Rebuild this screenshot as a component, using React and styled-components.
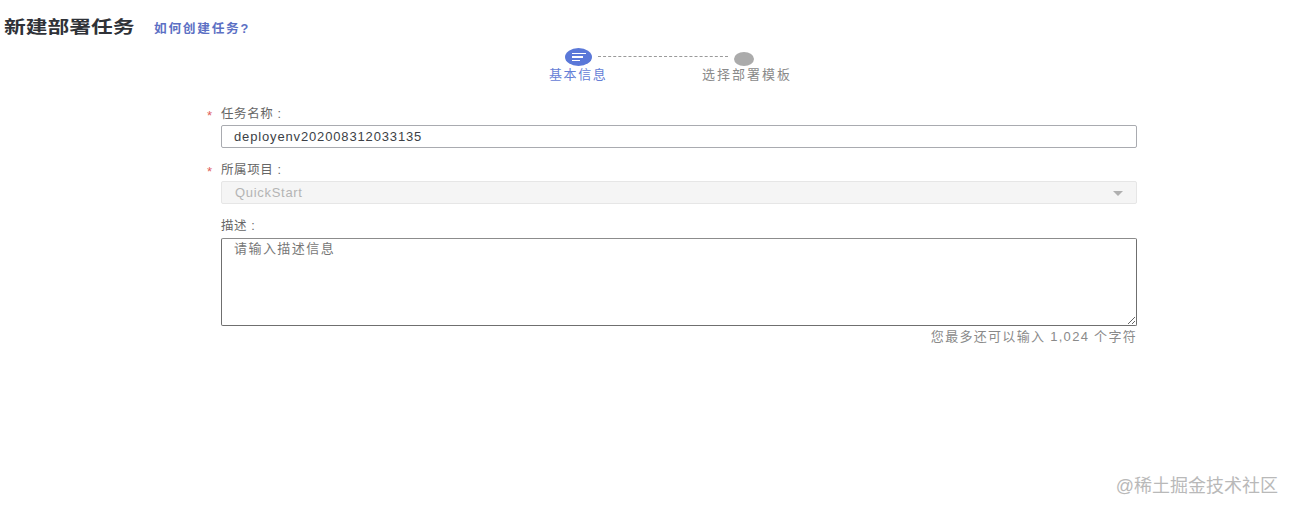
import styled, { createGlobalStyle } from "styled-components";

const GlobalStyle = createGlobalStyle`
	html, body {
		margin: 0;
		padding: 0;
		background: #fff;
		font-family: "Liberation Sans", "Noto Sans CJK SC", sans-serif;
	}
`;

const Page = styled.div`
	position: relative;
	width: 1293px;
	height: 513px;
	overflow: hidden;
	box-sizing: border-box;
	padding-top: 18px;
`;

const Header = styled.header`
	display: flex;
	align-items: center;
	height: 19px;
	padding-left: 4px;
`;

const Title = styled.h1`
	margin: 0;
	width: 150px;
	font-size: 17px;
	line-height: 19px;
	font-weight: 700;
	color: #2f3238;
	white-space: nowrap;
	transform: scaleX(1.28);
	transform-origin: left center;
`;

const HelpLink = styled.a`
	font-size: 12px;
	font-weight: 700;
	letter-spacing: 1.6px;
	color: #5c70c4;
	transform: scaleX(1.06);
	transform-origin: left center;
`;

const Track = styled.div`
	display: flex;
	align-items: center;
	gap: 6px;
	margin: 11px 0 0 565px;
	height: 18px;
`;

const StepDot = styled.span`
	display: flex;
	flex-direction: column;
	align-items: center;
	justify-content: center;
	gap: 2px;
	width: ${(p) => (p.$active ? "27px" : "20px")};
	height: ${(p) => (p.$active ? "18px" : "14px")};
	margin-top: ${(p) => (p.$active ? "0" : "4px")};
	border-radius: 50%;
	background: ${(p) => (p.$active ? "#5a78d8" : "#ababab")};
`;

const DotLine = styled.i`
	display: block;
	height: 1.5px;
	width: ${(p) => p.$w}px;
	margin-right: ${(p) => 14 - p.$w}px;
	background: #fff;
`;

const Connector = styled.span`
	width: 130px;
	margin-top: -2px;
	border-top: 1px dashed #9a9a9a;
`;

const StepLabels = styled.div`
	display: grid;
	grid-template-columns: 153px 90px;
	margin: 1px 0 0 549px;
`;

const StepLabel = styled.span`
	font-size: 13px;
	line-height: 16px;
	letter-spacing: ${(p) => (p.$active ? "1.6px" : "2px")};
	color: ${(p) => (p.$active ? "#6580d6" : "#8a8a8a")};
	white-space: nowrap;
`;

const Form = styled.form`
	display: flex;
	flex-direction: column;
	width: 916px;
	margin: 23px 0 0 221px;
`;

const Field = styled.div`
	display: flex;
	flex-direction: column;
	margin-bottom: 14px;
`;

const Label = styled.label`
	position: relative;
	font-size: 12.5px;
	line-height: 16px;
	height: 16px;
	margin-bottom: ${(p) => (p.$tall ? "4px" : "3px")};
	letter-spacing: 0.6px;
	color: #666;

	${(p) =>
		p.$required &&
		`&::before {
			content: "*";
			position: absolute;
			left: -14px;
			top: 2px;
			color: #e0605a;
			font-size: 13px;
		}`}
`;

const TextInput = styled.input`
	box-sizing: border-box;
	width: 100%;
	height: 23px;
	padding: 0 12px;
	border: 1px solid #a9abb0;
	border-radius: 2px;
	outline: none;
	font: 13px "Liberation Sans", sans-serif;
	letter-spacing: 0.85px;
	color: #3c3f46;
`;

const SelectBox = styled.div`
	box-sizing: border-box;
	display: flex;
	align-items: center;
	justify-content: space-between;
	height: 23px;
	padding: 0 13px 0 13px;
	border: 1px solid #e6e6e6;
	border-radius: 2px;
	background: #f5f5f5;
	font-size: 13px;
	letter-spacing: 0.7px;
	color: #b4b4b4;
`;

const Caret = styled.span`
	width: 0;
	height: 0;
	border-left: 5px solid transparent;
	border-right: 5px solid transparent;
	border-top: 5px solid #b0b0b0;
	margin-top: 2px;
`;

const TextArea = styled.textarea`
	box-sizing: border-box;
	display: block;
	width: 100%;
	height: 88px;
	padding: 3px 12px;
	border: 1px solid #6f6f6f;
	border-top-color: #8c8c8c;
	border-radius: 2px;
	outline: none;
	font: 13px "Liberation Sans", "Noto Sans CJK SC", sans-serif;
	letter-spacing: 1.45px;
	line-height: 14px;

	&::placeholder {
		color: #777;
		opacity: 1;
	}
`;

const Hint = styled.div`
	margin-top: 4px;
	text-align: right;
	font-size: 13px;
	line-height: 14px;
	letter-spacing: 1.3px;
	color: #8a8a8a;
`;

const Watermark = styled.div`
	position: absolute;
	right: 15px;
	top: 475px;
	font-size: 18px;
	line-height: 22px;
	color: #b9b9b9;
`;

export default function App() {
	return (
		<>
			<GlobalStyle />
			<Page>
				<Header>
					<Title>新建部署任务</Title>
					<HelpLink>如何创建任务?</HelpLink>
				</Header>

				<Track>
					<StepDot $active>
						<DotLine $w={14} />
						<DotLine $w={11} />
						<DotLine $w={8} />
					</StepDot>
					<Connector />
					<StepDot />
				</Track>
				<StepLabels>
					<StepLabel $active>基本信息</StepLabel>
					<StepLabel>选择部署模板</StepLabel>
				</StepLabels>

				<Form>
					<Field>
						<Label $required>任务名称 :</Label>
						<TextInput defaultValue="deployenv202008312033135" />
					</Field>
					<Field>
						<Label $required>所属项目 :</Label>
						<SelectBox>
							QuickStart
							<Caret />
						</SelectBox>
					</Field>
					<Field>
						<Label $tall>描述 :</Label>
						<TextArea placeholder="请输入描述信息" />
						<Hint>您最多还可以输入 1,024 个字符</Hint>
					</Field>
				</Form>

				<Watermark>@稀土掘金技术社区</Watermark>
			</Page>
		</>
	);
}
